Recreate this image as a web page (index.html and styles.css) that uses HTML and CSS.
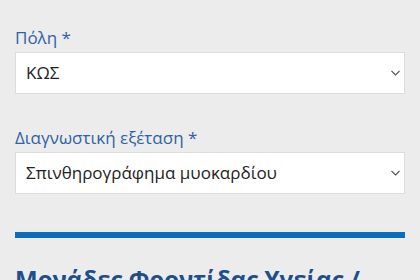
FILE: index.html
```html
<!DOCTYPE html>
<html>
  <head>
    <meta charset="utf-8">
    <title>Αναζήτηση</title>
    <link rel="stylesheet" href="styles.css">
  </head>
  <body>
    <div class="search-form">
      <div class="field">
        <label class="field-label">Πόλη *</label>
        <div class="select">
          <span class="select-value">ΚΩΣ</span>
          <svg class="chevron" width="9" height="6" viewBox="0 0 9 6"><path d="M0.5 1l4 4 4-4" fill="none" stroke="#555" stroke-width="1.1"/></svg>
        </div>
      </div>
      <div class="field">
        <label class="field-label">Διαγνωστική εξέταση *</label>
        <div class="select">
          <span class="select-value">Σπινθηρογράφημα μυοκαρδίου</span>
          <svg class="chevron" width="9" height="6" viewBox="0 0 9 6"><path d="M0.5 1l4 4 4-4" fill="none" stroke="#555" stroke-width="1.1"/></svg>
        </div>
      </div>
    </div>
    <div class="divider"></div>
    <h2 class="results-title">Μονάδες Φροντίδας Υγείας /</h2>
  </body>
</html>
```
FILE: styles.css
```css
* {
  margin: 0;
  padding: 0;
  box-sizing: border-box;
}
html {
  height: 100%;
}
body {
  background: #ececec;
  font-family: "Open Sans", "Noto Sans", sans-serif;
  font-size: 17px;
  padding: 26px 15px 0;
  overflow: hidden;
}
.search-form {
  display: flex;
  flex-direction: column;
  gap: 32px;
}
.field-label {
  display: block;
  color: #2f62a6;
  line-height: 24px;
  margin-bottom: 2px;
}
.select {
  display: flex;
  align-items: center;
  justify-content: space-between;
  height: 42px;
  background: #fff;
  border: 1px solid #dcdcdc;
  padding: 0 4px 0 10px;
  color: #222;
}
.select-value {
  line-height: 24px;
}
.chevron {
  display: block;
}
.divider {
  height: 6px;
  background: #0b6cbc;
  margin-top: 38px;
}
.results-title {
  margin-top: 26px;
  color: #1c4f8f;
  font-size: 24px;
  font-weight: 700;
  line-height: 30px;
}
```
